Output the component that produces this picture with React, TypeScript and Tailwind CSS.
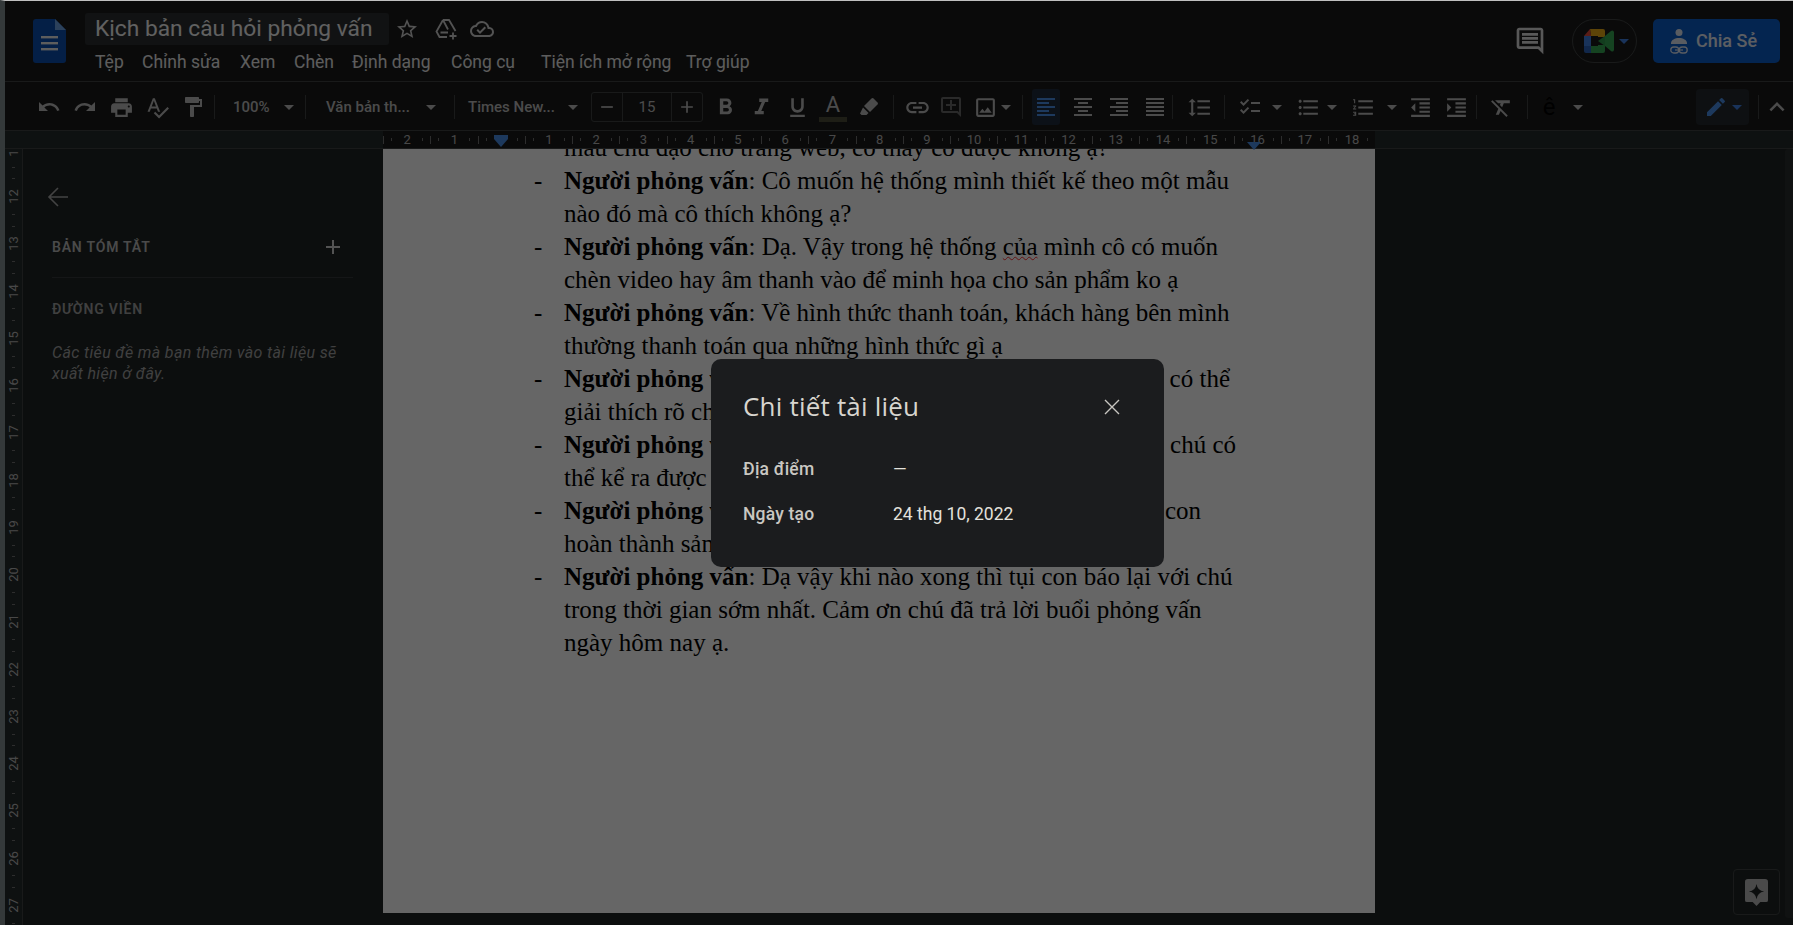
import React from "react"
import {
    MdAdd, MdChecklist, MdEdit, MdExpandLess, MdFormatAlignCenter,
    MdFormatAlignJustify, MdFormatAlignLeft, MdFormatAlignRight, MdFormatBold, MdFormatClear,
    MdFormatIndentDecrease, MdFormatIndentIncrease, MdFormatItalic, MdFormatLineSpacing,
    MdFormatListBulleted, MdFormatListNumbered, MdFormatPaint, MdFormatUnderlined, MdLink,
    MdOutlineAddComment, MdOutlineCloudDone, MdOutlineComment, MdOutlineImage,
    MdPrint, MdRedo, MdRemove, MdSpellcheck, MdStarBorder, MdUndo
} from "react-icons/md"

const Btn = ({ children, className = "w-[36px]" }: { children: React.ReactNode, className?: string }) => (
    <div className={`flex h-[36px] shrink-0 items-center justify-center ${className}`}>{children}</div>
)

const Sep = ({ className = "" }: { className?: string }) => (
    <div className={`h-[24px] w-px shrink-0 bg-[#3f4242] ${className}`} />
)

const Caret = ({ className = "", color = "border-t-[#bcbcbc]" }: { className?: string, color?: string }) => (
    <div className={`h-0 w-0 shrink-0 border-x-[5px] border-t-[5px] border-x-transparent ${color} ${className}`} />
)

// menu widths follow the spacing in the docs menu bar
const menuItems = [
    { label: "Tệp", className: "w-[47px]" },
    { label: "Chỉnh sửa", className: "w-[98px]" },
    { label: "Xem", className: "w-[54px]" },
    { label: "Chèn", className: "w-[58px]" },
    { label: "Định dạng", className: "w-[99px]" },
    { label: "Công cụ", className: "w-[90px]" },
    { label: "Tiện ích mở rộng", className: "w-[145px]" },
    { label: "Trợ giúp", className: "w-[70px]" },
]

const DocsLogo = () => (
    <svg width="33" height="44" viewBox="0 0 33 44" className="shrink-0">
        <path d="M3 0h19l11 11v30a3 3 0 0 1-3 3H3a3 3 0 0 1-3-3V3a3 3 0 0 1 3-3z" fill="#0c4fb0" />
        <path d="M22 0l11 11H22z" fill="#6ea4e4" />
        <rect x="8" y="17" width="17" height="2.4" fill="#e8e8e8" />
        <rect x="8" y="23" width="17" height="2.4" fill="#e8e8e8" />
        <rect x="8" y="29" width="17" height="2.4" fill="#e8e8e8" />
    </svg>
)

const DriveIcon = () => (
    <svg width="24" height="24" viewBox="0 0 24 24" fill="none" stroke="#cfcfcf" strokeWidth="1.8" className="ml-[15px]">
        <path d="M9 3h6l6.5 11M9 3L2.5 14.5 5.5 20H13M9 3l5 9.5M6.5 15.5H14" />
        <path d="M19 15.5v7M15.5 19h7" />
    </svg>
)

const HighlightIcon = () => (
    <svg width="22" height="22" viewBox="0 0 22 22" fill="#bcbcbc">
        <path d="M13.5 2.5a1.5 1.5 0 0 1 2.1 0l3.9 3.9a1.5 1.5 0 0 1 0 2.1l-7.5 7.5-6-6z" />
        <path d="M5 11.5l5.5 5.5-2 2H3.5l-1.5-1.5z" />
    </svg>
)

const MeetLogo = () => (
    <svg width="30" height="24" viewBox="0 0 30 24">
        <path d="M6 0h13a2 2 0 0 1 2 2v6h-7V7H7z" fill="#e8ab14" />
        <path d="M6 0L0 7h7z" fill="#e04a3a" />
        <path d="M0 7h7v10H0z" fill="#3f80e0" />
        <path d="M0 17h7v7H2a2 2 0 0 1-2-2z" fill="#2b62b8" />
        <path d="M7 17h7v-1h7v6a2 2 0 0 1-2 2H7z" fill="#35a853" />
        <path d="M14 12l7-5v10z" fill="#2f9a4c" />
        <path d="M21 7l6-5a2 2 0 0 1 3 1v18a2 2 0 0 1-3 1l-6-5z" fill="#35a853" />
    </svg>
)

const ShareIcon = () => (
    <svg width="18" height="25" viewBox="0 0 18 25" fill="#dfe6f2">
        <circle cx="9" cy="3.5" r="3.5" />
        <path d="M1 14c0-3 4-5 8-5s8 2 8 5v1H1z" />
        <rect x="0.8" y="18" width="8" height="6" rx="3" fill="none" stroke="#dfe6f2" strokeWidth="1.3" />
        <rect x="9.2" y="18" width="8" height="6" rx="3" fill="none" stroke="#dfe6f2" strokeWidth="1.3" />
        <rect x="5" y="20.4" width="8" height="1.2" />
    </svg>
)

const rulerCells = ["2", "1", "", "1", "2", "3", "4", "5", "6", "7", "8", "9", "10", "11", "12", "13", "14", "15", "16", "17", "18"]
const sideRuler = ["11", "12", "13", "14", "15", "16", "17", "18", "19", "20", "21", "22", "23", "24", "25", "26", "27"]

const Q = "Người phỏng vấn"

const Row = ({ children, dash = false }: { children: React.ReactNode, dash?: boolean }) => (
    <div className="flex h-[33px] items-center whitespace-nowrap">
        <span className="w-[31px] shrink-0 pl-[1px]">{dash ? "-" : ""}</span>
        <div className="flex w-[672px] shrink-0">{children}</div>
    </div>
)

const App = () => {
    return (
        <div className="relative h-[925px] w-full overflow-hidden border-l-[5px] border-t-[1px] border-l-[#34393a] border-t-[#c0c0c0] bg-[#1f2424] font-[Roboto,sans-serif]">
            {/* title bar */}
            <div className="flex h-[81px] items-center border-b border-[#3f4242] bg-[#1b1b1b] pl-[28px] pr-[13px]">
                <DocsLogo />
                <div className="ml-[19px] mt-[6px] flex flex-col">
                    <div className="flex items-center">
                        <div className="flex h-[32px] w-[304px] items-center rounded-[3px] bg-[#2c2f31] pl-[10px] text-[22.75px] text-[#f2f2f2]">
                            Kịch bản câu hỏi phỏng vấn
                        </div>
                        <MdStarBorder className="ml-[6px] text-[#cfcfcf]" size={24} />
                        <DriveIcon />
                        <MdOutlineCloudDone className="ml-[12px] text-[#cfcfcf]" size={24} />
                    </div>
                    <div className="mt-[4px] flex pl-[10px] text-[17.5px] text-[#e8e8e8]">
                        {menuItems.map((item) => (
                            <span key={item.label} className={`shrink-0 whitespace-nowrap ${item.className}`}>{item.label}</span>
                        ))}
                    </div>
                </div>
                <MdOutlineComment className="ml-auto text-[#dddddd]" size={32} />
                <div className="ml-[26px] flex h-[44px] w-[65px] items-center rounded-full border border-[#3f4242] pl-[11px]">
                    <MeetLogo />
                    <Caret className="ml-[5px]" color="border-t-[#3f80e0]" />
                </div>
                <div className="ml-[16px] flex h-[44px] w-[127px] items-center rounded-[5px] bg-[#0b5cc8] pl-[17px] text-[18px] font-medium text-[#e6ecf5]">
                    <ShareIcon />
                    <span className="ml-[8px] pb-[2px]">Chia Sẻ</span>
                </div>
            </div>

            {/* toolbar */}
            <div className="flex h-[49px] items-center border-b border-[#3f4242] bg-[#1b1b1b] pl-[26px] pt-[2px] text-[15px] font-medium text-[#bcbcbc]">
                <Btn><MdUndo size={24} /></Btn>
                <Btn><MdRedo size={24} /></Btn>
                <Btn><MdPrint size={25} /></Btn>
                <Btn><MdSpellcheck size={25} /></Btn>
                <Btn><MdFormatPaint size={24} /></Btn>
                <Sep className="ml-[3px]" />
                <span className="ml-[18px] w-[38px] shrink-0">100%</span>
                <Caret className="ml-[13px]" />
                <Sep className="ml-[11px]" />
                <span className="ml-[20px] w-[83px] shrink-0 whitespace-nowrap">Văn bản th...</span>
                <Caret className="ml-[17px]" />
                <Sep className="ml-[18px]" />
                <span className="ml-[13px] w-[87px] shrink-0 whitespace-nowrap">Times New...</span>
                <Caret className="ml-[13px]" />
                <div className="ml-[13px] flex h-[30px] w-[112px] shrink-0 items-center rounded-[3px] border border-[#3f4242]">
                    <div className="flex w-[30px] justify-center"><MdRemove size={20} /></div>
                    <div className="flex h-full w-[50px] items-center justify-center border-x border-[#3f4242] font-normal">15</div>
                    <div className="flex w-[30px] justify-center"><MdAdd size={20} /></div>
                </div>
                <Btn className="ml-[4px] w-[36px]"><MdFormatBold size={27} /></Btn>
                <Btn><MdFormatItalic size={27} /></Btn>
                <Btn><MdFormatUnderlined size={25} /></Btn>
                <Btn className="w-[36px] flex-col">
                    <span className="text-[22px] font-normal leading-[24px]">A</span>
                    <div className="h-[5px] w-[28px] bg-[#4b4b38]" />
                </Btn>
                <Btn><HighlightIcon /></Btn>
                <Sep className="ml-[6px]" />
                <Btn className="ml-[6px] w-[34px]"><MdLink size={27} /></Btn>
                <Btn className="w-[34px] text-[#6a6a6a]"><MdOutlineAddComment size={24} /></Btn>
                <Btn className="ml-[1px] w-[32px]"><MdOutlineImage size={25} /></Btn>
                <Caret />
                <Sep className="ml-[11px]" />
                <Btn className="relative ml-[5px] w-[36px] text-[#4a90e8]">
                    <div className="absolute inset-y-0 left-[4px] w-[28px] rounded-[3px] bg-[#1f2c3c]" />
                    <MdFormatAlignLeft className="relative" size={24} />
                </Btn>
                <Btn className="ml-[1px] w-[36px]"><MdFormatAlignCenter size={24} /></Btn>
                <Btn><MdFormatAlignRight size={24} /></Btn>
                <Btn className="w-[35px]"><MdFormatAlignJustify size={24} /></Btn>
                <Sep />
                <Btn className="ml-[8px] w-[36px]"><MdFormatLineSpacing size={25} /></Btn>
                <Sep className="ml-[7px]" />
                <Btn className="ml-[9px] w-[32px]"><MdChecklist size={24} /></Btn>
                <Caret className="ml-[6px]" />
                <Btn className="ml-[10px] w-[32px]"><MdFormatListBulleted size={25} /></Btn>
                <Caret className="ml-[3px]" />
                <Btn className="ml-[10px] w-[32px]"><MdFormatListNumbered size={25} /></Btn>
                <Caret className="ml-[8px]" />
                <Btn className="ml-[5px] w-[36px]"><MdFormatIndentDecrease size={25} /></Btn>
                <Btn><MdFormatIndentIncrease size={25} /></Btn>
                <Sep className="ml-[2px]" />
                <Btn className="ml-[6px] w-[36px]"><MdFormatClear size={25} /></Btn>
                <Sep className="ml-[8px]" />
                <Btn className="ml-[9px] w-[24px] text-[24px] font-normal text-black">ê</Btn>
                <Caret className="ml-[12px]" />
                <div className="ml-auto flex h-[36px] w-[53px] items-center justify-center rounded-[4px] bg-[#23292f]">
                    <MdEdit className="text-[#4a90e8]" size={24} />
                    <Caret className="ml-[4px]" color="border-t-[#3f80e0]" />
                </div>
                <Sep className="ml-[9px]" />
                <Btn className="ml-[2px] w-[32px]"><MdExpandLess size={30} /></Btn>
            </div>

            {/* horizontal ruler */}
            <div className="flex h-[18px] border-b border-[#3f4242] bg-[#252b2b] pl-[378px]">
                <div className="flex h-full w-[992px] bg-[#1b1b1b] text-[13px] text-[#b5b5b5]">
                    {rulerCells.map((label, index) => (
                        <div key={index} className="flex w-[47.25px] shrink-0 items-center justify-between">
                            <span className="h-[8px] w-px bg-[#707070]" />
                            <span className="h-[3px] w-px bg-[#707070]" />
                            <span className="w-[16px] text-center leading-none">{label}</span>
                            <span className="h-[3px] w-px bg-[#707070]" />
                            <span className="w-0" />
                        </div>
                    ))}
                </div>
            </div>
            <div className="absolute left-[489px] top-[134px] flex flex-col items-center">
                <div className="h-[4px] w-[14px] bg-[#4a90e8]" />
                <div className="h-0 w-0 border-x-[7px] border-t-[8px] border-x-transparent border-t-[#4a90e8]" />
            </div>
            <div className="absolute left-[1242px] top-[141px] h-0 w-0 border-x-[7px] border-t-[8px] border-x-transparent border-t-[#4a90e8]" />

            {/* body */}
            <div className="flex h-[776px] overflow-hidden">
                <div className="flex w-[18px] shrink-0 flex-col items-center border-r border-[#3f4242] bg-[#252b2b] text-[13px] text-[#b5b5b5]">
                    {sideRuler.map((label, index) => (
                        <div key={label} className={`flex w-full shrink-0 flex-col items-center justify-between ${index === 0 ? "-mt-[18px] h-[47.25px]" : "h-[47.25px]"}`}>
                            <span className="h-px w-[3px] bg-[#707070]" />
                            <span className="-rotate-90 leading-none">{label}</span>
                            <span className="h-px w-[3px] bg-[#707070]" />
                            <span className="h-0" />
                        </div>
                    ))}
                </div>
                <div className="w-[360px] shrink-0 pl-[29px] text-[#cfcfcf]">
                    <svg width="22" height="22" viewBox="0 0 22 22" fill="none" stroke="#a8a8a8" strokeWidth="1.6" className="ml-[-5px] mt-[37px]">
                        <path d="M21 11H2M11 2l-9 9 9 9" />
                    </svg>
                    <div className="mt-[29px] flex h-[20px] w-[301px] items-center justify-between pr-[13px] text-[14px] font-semibold tracking-[0.8px] text-[#b8b8b8]">
                        <span>BẢN TÓM TẮT</span>
                        <svg width="14" height="14" viewBox="0 0 14 14" fill="#cfcfcf">
                            <path d="M6 0h2v6h6v2H8v6H6V8H0V6h6z" />
                        </svg>
                    </div>
                    <div className="mt-[20px] h-px w-[301px] bg-[#35393a]" />
                    <div className="mt-[21px] text-[14px] font-semibold leading-[20px] tracking-[0.8px] text-[#a0a0a0]">ĐƯỜNG VIỀN</div>
                    <div className="mt-[23px] w-[301px] text-[16px] italic leading-[21px] tracking-[0.35px] text-[#a0a0a0]">
                        Các tiêu đề mà bạn thêm vào tài liệu sẽ xuất hiện ở đây.
                    </div>
                </div>
                <div className="h-[764px] w-[992px] shrink-0 overflow-hidden bg-white pl-[150px] font-['Liberation_Serif',serif] text-[25px] text-black">
                    <div className="-mt-[18px]">
                        <Row>màu chủ đạo cho trang web, cô thấy cô được không ạ?</Row>
                        <Row dash><span><b>{Q}</b>: Cô muốn hệ thống mình thiết kế theo một mẫu</span></Row>
                        <Row>nào đó mà cô thích không ạ?</Row>
                        <Row dash><span><b>{Q}</b>: Dạ. Vậy trong hệ thống <span className="underline decoration-[#ff3030] decoration-wavy decoration-1">của</span> mình cô có muốn</span></Row>
                        <Row>chèn video hay âm thanh vào để minh họa cho sản phẩm ko ạ</Row>
                        <Row dash><span><b>{Q}</b>: Về hình thức thanh toán, khách hàng bên mình</span></Row>
                        <Row>thường thanh toán qua những hình thức gì ạ</Row>
                        <Row dash><span><b>{Q}</b></span><span className="ml-auto mr-[6px]">có thể</span></Row>
                        <Row>giải thích rõ cho</Row>
                        <Row dash><span><b>{Q}</b></span><span className="ml-auto">chú có</span></Row>
                        <Row>thể kể ra được</Row>
                        <Row dash><span><b>{Q}</b></span><span className="ml-auto mr-[35px]">con</span></Row>
                        <Row>hoàn thành sản</Row>
                        <Row dash><span><b>{Q}</b>: Dạ vậy khi nào xong thì tụi con báo lại với chú</span></Row>
                        <Row>trong thời gian sớm nhất. Cảm ơn chú đã trả lời buổi phỏng vấn</Row>
                        <Row>ngày hôm nay ạ.</Row>
                    </div>
                </div>
                <div className="relative flex-1">
                    <div className="absolute right-0 top-0 h-[769px] w-[8px] rounded-l-[3px] bg-[#2a2e2e]" />
                    <div className="absolute bottom-[10px] right-[13px] flex h-[46px] w-[47px] items-center justify-center rounded-[4px] border border-[#3f4242]">
                        <svg width="23" height="27" viewBox="0 0 24 28">
                            <path d="M3 0h18a3 3 0 0 1 3 3v19a2 2 0 0 1-2 2h-6l-4 4-4-4H2a2 2 0 0 1-2-2V3a3 3 0 0 1 3-3z" fill="#b8b8b8" />
                            <path d="M12 5q1 7 8 8q-7 1-8 8q-1-7-8-8q7-1 8-8z" fill="#1f2424" />
                        </svg>
                    </div>
                </div>
            </div>

            {/* dim layer */}
            <div className="absolute inset-0 bg-black/60" />

            {/* details dialog */}
            <div className="absolute left-[706px] top-[358px] h-[208px] w-[453px] rounded-[10px] bg-[#1b1c1e] pl-[32px] text-[#e3e1dc]">
                <div className="flex h-[98px] items-start justify-between pr-[44px] pt-[28px]">
                    <span className="font-['Open_Sans',sans-serif] text-[26px] font-normal leading-[38px] tracking-[0.2px] text-[#d8d5cf]">Chi tiết tài liệu</span>
                    <svg width="16" height="16" viewBox="0 0 16 16" fill="none" stroke="#c8c6c1" strokeWidth="1.4" className="mt-[12px]">
                        <path d="M1 1l14 14M15 1L1 15" />
                    </svg>
                </div>
                <div className="grid grid-cols-[150px_1fr] gap-y-[21px] text-[17.5px] leading-[24px]">
                    <span className="font-medium tracking-[0.2px] text-[#c9c7c2]">Địa điểm</span>
                    <span>—</span>
                    <span className="font-medium tracking-[0.2px] text-[#c9c7c2]">Ngày tạo</span>
                    <span>24 thg 10, 2022</span>
                </div>
            </div>
        </div>
    );
}

export default App;
